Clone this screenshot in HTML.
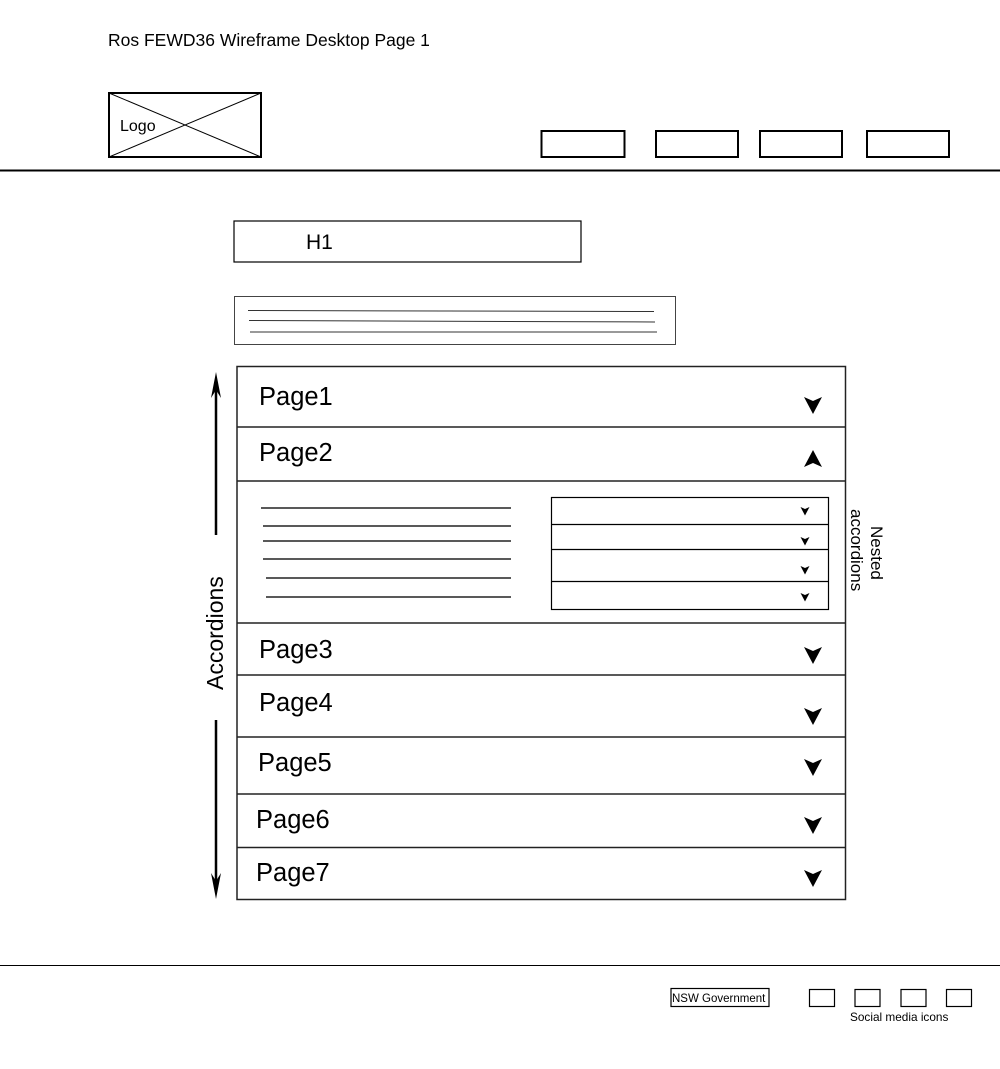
<!DOCTYPE html>
<html><head><meta charset="utf-8"><style>
html,body{margin:0;padding:0;background:#fff;width:1000px;height:1069px;overflow:hidden}
svg{display:block}
text{font-family:"Liberation Sans",sans-serif;fill:#000}
</style></head><body>
<svg width="1000" height="1069" viewBox="0 0 1000 1069" xmlns="http://www.w3.org/2000/svg">
<defs>
<path id="dn" d="M-9,-8 L0,-4 L9,-8 L0,9 Z"/>
</defs>
<text x="108" y="46" font-size="17.5">Ros FEWD36 Wireframe Desktop Page 1</text>
<!-- logo -->
<rect x="109" y="93" width="152" height="64" fill="none" stroke="#000" stroke-width="2"/>
<line x1="109" y1="93" x2="261" y2="157" stroke="#000" stroke-width="1"/>
<line x1="109" y1="157" x2="261" y2="93" stroke="#000" stroke-width="1"/>
<text x="120" y="131" font-size="16">Logo</text>
<!-- nav -->
<g fill="none" stroke="#000" stroke-width="2">
<rect x="541.5" y="131" width="83" height="26"/>
<rect x="656" y="131" width="82" height="26"/>
<rect x="760" y="131" width="82" height="26"/>
<rect x="867" y="131" width="82" height="26"/>
</g>
<line x1="0" y1="170.5" x2="1000" y2="170.5" stroke="#000" stroke-width="2"/>
<!-- H1 -->
<rect x="234" y="221" width="347" height="41" fill="none" stroke="#000" stroke-width="1.2"/>
<text x="306" y="249" font-size="21">H1</text>
<!-- paragraph -->
<rect x="234.5" y="296.5" width="441" height="48" fill="none" stroke="#444" stroke-width="1"/>
<g stroke="#333" stroke-width="1">
<line x1="248" y1="310.5" x2="654" y2="311.5"/>
<line x1="249" y1="320.5" x2="655" y2="322"/>
<line x1="250" y1="332" x2="657" y2="332"/>
</g>
<!-- accordion -->
<rect x="237" y="366.5" width="608.5" height="533" fill="none" stroke="#222" stroke-width="1.5"/>
<g stroke="#222" stroke-width="1.5">
<line x1="237" y1="427" x2="845" y2="427"/>
<line x1="237" y1="481" x2="845" y2="481"/>
<line x1="237" y1="623" x2="845" y2="623"/>
<line x1="237" y1="675" x2="845" y2="675"/>
<line x1="237" y1="737" x2="845" y2="737"/>
<line x1="237" y1="794" x2="845" y2="794"/>
<line x1="237" y1="847.5" x2="845" y2="847.5"/>
</g>
<g font-size="25.5">
<text x="259" y="405">Page1</text>
<text x="259" y="461">Page2</text>
<text x="259" y="658">Page3</text>
<text x="259" y="711">Page4</text>
<text x="258" y="771">Page5</text>
<text x="256" y="828">Page6</text>
<text x="256" y="881">Page7</text>
</g>
<use href="#dn" x="813" y="405"/>
<use href="#dn" transform="translate(813 459) scale(1 -1)"/>
<use href="#dn" x="813" y="655"/>
<use href="#dn" x="813" y="716"/>
<use href="#dn" x="813" y="767"/>
<use href="#dn" x="813" y="825"/>
<use href="#dn" x="813" y="878"/>
<!-- text lines -->
<g stroke="#222" stroke-width="1.5">
<line x1="261" y1="508" x2="511" y2="508"/>
<line x1="263" y1="526" x2="511" y2="526"/>
<line x1="263" y1="541" x2="511" y2="541"/>
<line x1="263" y1="559" x2="511" y2="559"/>
<line x1="266" y1="578" x2="511" y2="578"/>
<line x1="266" y1="597" x2="511" y2="597"/>
</g>
<!-- nested -->
<rect x="551.5" y="497.5" width="277" height="112" fill="none" stroke="#000" stroke-width="1.2"/>
<g stroke="#000" stroke-width="1.2">
<line x1="551" y1="524.5" x2="828" y2="524.5"/>
<line x1="551" y1="549.5" x2="828" y2="549.5"/>
<line x1="551" y1="581.5" x2="828" y2="581.5"/>
</g>
<g>
<use href="#dn" transform="translate(805 511) scale(0.5)"/>
<use href="#dn" transform="translate(805 541) scale(0.5)"/>
<use href="#dn" transform="translate(805 570) scale(0.5)"/>
<use href="#dn" transform="translate(805 597) scale(0.5)"/>
</g>
<text transform="translate(871 526) rotate(90)" font-size="17">Nested</text>
<text transform="translate(851 509) rotate(90)" font-size="17">accordions</text>
<!-- left arrow -->
<g stroke="#000" stroke-width="2.5">
<line x1="216" y1="385" x2="216" y2="535"/>
<line x1="216" y1="720" x2="216" y2="885"/>
</g>
<path d="M216,372 L221,398 L216,390 L211,398 Z" fill="#000"/>
<path d="M216,899 L221,873 L216,881 L211,873 Z" fill="#000"/>
<text transform="translate(223 690) rotate(-90)" font-size="23">Accordions</text>
<!-- footer -->
<line x1="0" y1="965.5" x2="1000" y2="965.5" stroke="#000" stroke-width="1"/>
<rect x="671" y="988.5" width="98" height="18" fill="none" stroke="#000" stroke-width="1.2"/>
<text x="672" y="1002" font-size="11.5">NSW Government</text>
<g fill="none" stroke="#000" stroke-width="1.2">
<rect x="809.5" y="989.5" width="25" height="17"/>
<rect x="855" y="989.5" width="25" height="17"/>
<rect x="901" y="989.5" width="25" height="17"/>
<rect x="946.5" y="989.5" width="25" height="17"/>
</g>
<text x="850" y="1021" font-size="11.8">Social media icons</text>
</svg>
</body></html>
